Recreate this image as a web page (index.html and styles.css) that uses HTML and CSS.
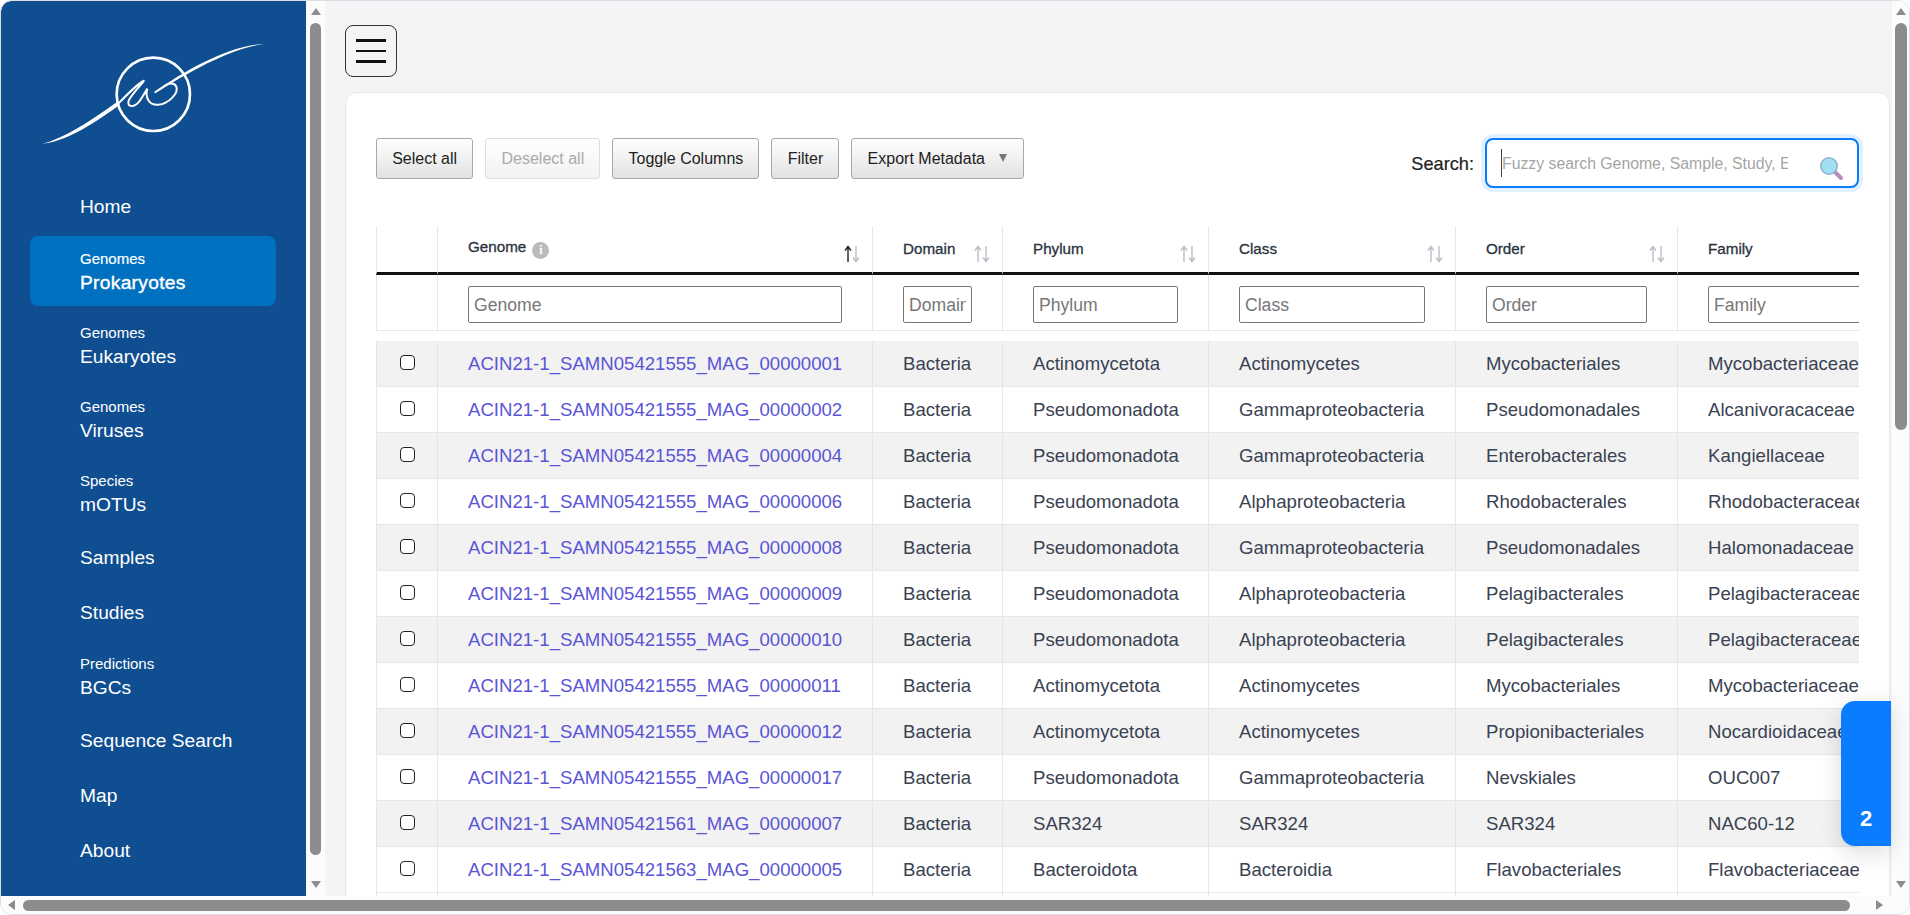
FILE: index.html
```html
<!DOCTYPE html>
<html lang="en">
<head>
    <meta charset="UTF-8">
    <meta name="viewport" content="width=device-width, initial-scale=1.0">
    <title>Genomes - Prokaryotes</title>
    <link rel="stylesheet" href="styles.css">
</head>
<body>
    <div class="window">
        <div class="window-body">
            <aside class="sidebar">
                <div class="logo">
                    <svg width="250" height="130" viewBox="0 0 750 390" fill="none">
                        <circle cx="370" cy="193" r="110" stroke="#fff" stroke-width="8"/>
                        <path d="M36 342C100 325 170 282 260 217L267 226C175 294 100 335 36 342Z" fill="#fff"/>
                        <path d="M262 224C290 195 318 165 340 153C350 148 305 190 296 212C290 232 312 234 328 214C340 198 346 185 352 176C345 200 355 226 385 224C415 222 447 190 439 170C434 158 418 158 402 168" stroke="#fff" stroke-width="6"/>
                        <path d="M372 186C470 120 590 50 702 41C620 56 530 92 376 190Z" fill="#fff"/>
                    </svg>
                </div>
                <nav class="nav">
                    <a class="nav-item nav-first" href="#">Home</a>
                    <a class="nav-item nav-double active" href="#"><small>Genomes</small>Prokaryotes</a>
                    <a class="nav-item nav-double" href="#"><small>Genomes</small>Eukaryotes</a>
                    <a class="nav-item nav-double" href="#"><small>Genomes</small>Viruses</a>
                    <a class="nav-item nav-double" href="#"><small>Species</small>mOTUs</a>
                    <a class="nav-item" href="#">Samples</a>
                    <a class="nav-item" href="#">Studies</a>
                    <a class="nav-item nav-double" href="#"><small>Predictions</small>BGCs</a>
                    <a class="nav-item" href="#">Sequence Search</a>
                    <a class="nav-item" href="#">Map</a>
                    <a class="nav-item" href="#">About</a>
                </nav>
            </aside>
            <div class="vbar vbar-side">
                <span class="arrow-up"></span>
                <span class="thumb thumb-side"></span>
                <span class="arrow-down"></span>
            </div>

            <main class="main">
                <button class="toggler" aria-label="Menu"><span></span><span></span><span></span></button>

                <section class="card">
                    <div class="toolbar">
                        <div class="buttons">
                            <button class="btn">Select all</button>
                            <button class="btn btn-disabled">Deselect all</button>
                            <button class="btn">Toggle Columns</button>
                            <button class="btn">Filter</button>
                            <button class="btn btn-export">Export Metadata <i class="caret-down"></i></button>
                        </div>
                        <label class="search">
                            <span class="search-label">Search:</span>
                            <span class="search-box">
                                <input type="text" placeholder="Fuzzy search Genome, Sample, Study, Experiment">
                                <i class="text-cursor"></i>
                                <svg class="search-icon" width="24" height="24" viewBox="0 0 24 24">
                                    <path d="M15 15L22 22" stroke="#b48dbb" stroke-width="4" stroke-linecap="round"/>
                                    <circle cx="10" cy="10" r="8.2" fill="#a0e0f0" stroke="#8fb3cf" stroke-width="1.6"/>
                                </svg>
                            </span>
                        </label>
                    </div>

                    <div class="table-scroll">
                        <table class="grid grid-head">
                            <colgroup>
                                <col class="c-check"><col class="c-genome"><col class="c-domain"><col class="c-phylum"><col class="c-class"><col class="c-order"><col class="c-family">
                            </colgroup>
                            <thead>
                                <tr class="title-row">
                                    <th></th>
                                    <th>Genome <i class="info">i</i><svg class="sort" width="16" height="18" viewBox="0 0 16 18"><path d="M4 17V2M1 5.5L4 1.5L7 5.5" stroke="#222" stroke-width="1.4" fill="none"/><path d="M12 1V16M9 12.5L12 16.5L15 12.5" stroke="#b9bfc7" stroke-width="1.4" fill="none"/></svg></th>
                                    <th>Domain<svg class="sort" width="16" height="18" viewBox="0 0 16 18"><path d="M4 17V2M1 5.5L4 1.5L7 5.5M12 1V16M9 12.5L12 16.5L15 12.5" stroke="#b9bfc7" stroke-width="1.4" fill="none"/></svg></th>
                                    <th>Phylum<svg class="sort" width="16" height="18" viewBox="0 0 16 18"><path d="M4 17V2M1 5.5L4 1.5L7 5.5M12 1V16M9 12.5L12 16.5L15 12.5" stroke="#b9bfc7" stroke-width="1.4" fill="none"/></svg></th>
                                    <th>Class<svg class="sort" width="16" height="18" viewBox="0 0 16 18"><path d="M4 17V2M1 5.5L4 1.5L7 5.5M12 1V16M9 12.5L12 16.5L15 12.5" stroke="#b9bfc7" stroke-width="1.4" fill="none"/></svg></th>
                                    <th>Order<svg class="sort" width="16" height="18" viewBox="0 0 16 18"><path d="M4 17V2M1 5.5L4 1.5L7 5.5M12 1V16M9 12.5L12 16.5L15 12.5" stroke="#b9bfc7" stroke-width="1.4" fill="none"/></svg></th>
                                    <th>Family</th>
                                </tr>
                                <tr class="filter-row">
                                    <td></td>
                                    <td><input type="text" placeholder="Genome"></td>
                                    <td><input type="text" placeholder="Domain"></td>
                                    <td><input type="text" placeholder="Phylum"></td>
                                    <td><input type="text" placeholder="Class"></td>
                                    <td><input type="text" placeholder="Order"></td>
                                    <td><input type="text" placeholder="Family"></td>
                                </tr>
                            </thead>
                        </table>
                        <table class="grid grid-body">
                            <colgroup>
                                <col class="c-check"><col class="c-genome"><col class="c-domain"><col class="c-phylum"><col class="c-class"><col class="c-order"><col class="c-family">
                            </colgroup>
                            <tbody>
                                <tr><td class="cell-check"><input type="checkbox"></td><td><a href="#">ACIN21-1_SAMN05421555_MAG_00000001</a></td><td>Bacteria</td><td>Actinomycetota</td><td>Actinomycetes</td><td>Mycobacteriales</td><td>Mycobacteriaceae</td></tr>
                                <tr><td class="cell-check"><input type="checkbox"></td><td><a href="#">ACIN21-1_SAMN05421555_MAG_00000002</a></td><td>Bacteria</td><td>Pseudomonadota</td><td>Gammaproteobacteria</td><td>Pseudomonadales</td><td>Alcanivoracaceae</td></tr>
                                <tr><td class="cell-check"><input type="checkbox"></td><td><a href="#">ACIN21-1_SAMN05421555_MAG_00000004</a></td><td>Bacteria</td><td>Pseudomonadota</td><td>Gammaproteobacteria</td><td>Enterobacterales</td><td>Kangiellaceae</td></tr>
                                <tr><td class="cell-check"><input type="checkbox"></td><td><a href="#">ACIN21-1_SAMN05421555_MAG_00000006</a></td><td>Bacteria</td><td>Pseudomonadota</td><td>Alphaproteobacteria</td><td>Rhodobacterales</td><td>Rhodobacteraceae</td></tr>
                                <tr><td class="cell-check"><input type="checkbox"></td><td><a href="#">ACIN21-1_SAMN05421555_MAG_00000008</a></td><td>Bacteria</td><td>Pseudomonadota</td><td>Gammaproteobacteria</td><td>Pseudomonadales</td><td>Halomonadaceae</td></tr>
                                <tr><td class="cell-check"><input type="checkbox"></td><td><a href="#">ACIN21-1_SAMN05421555_MAG_00000009</a></td><td>Bacteria</td><td>Pseudomonadota</td><td>Alphaproteobacteria</td><td>Pelagibacterales</td><td>Pelagibacteraceae</td></tr>
                                <tr><td class="cell-check"><input type="checkbox"></td><td><a href="#">ACIN21-1_SAMN05421555_MAG_00000010</a></td><td>Bacteria</td><td>Pseudomonadota</td><td>Alphaproteobacteria</td><td>Pelagibacterales</td><td>Pelagibacteraceae</td></tr>
                                <tr><td class="cell-check"><input type="checkbox"></td><td><a href="#">ACIN21-1_SAMN05421555_MAG_00000011</a></td><td>Bacteria</td><td>Actinomycetota</td><td>Actinomycetes</td><td>Mycobacteriales</td><td>Mycobacteriaceae</td></tr>
                                <tr><td class="cell-check"><input type="checkbox"></td><td><a href="#">ACIN21-1_SAMN05421555_MAG_00000012</a></td><td>Bacteria</td><td>Actinomycetota</td><td>Actinomycetes</td><td>Propionibacteriales</td><td>Nocardioidaceae</td></tr>
                                <tr><td class="cell-check"><input type="checkbox"></td><td><a href="#">ACIN21-1_SAMN05421555_MAG_00000017</a></td><td>Bacteria</td><td>Pseudomonadota</td><td>Gammaproteobacteria</td><td>Nevskiales</td><td>OUC007</td></tr>
                                <tr><td class="cell-check"><input type="checkbox"></td><td><a href="#">ACIN21-1_SAMN05421561_MAG_00000007</a></td><td>Bacteria</td><td>SAR324</td><td>SAR324</td><td>SAR324</td><td>NAC60-12</td></tr>
                                <tr><td class="cell-check"><input type="checkbox"></td><td><a href="#">ACIN21-1_SAMN05421563_MAG_00000005</a></td><td>Bacteria</td><td>Bacteroidota</td><td>Bacteroidia</td><td>Flavobacteriales</td><td>Flavobacteriaceae</td></tr>
                                <tr><td></td><td></td><td></td><td></td><td></td><td></td><td></td></tr>
                            </tbody>
                        </table>
                    </div>
                </section>
            </main>

            <div class="vbar vbar-page">
                <span class="arrow-up"></span>
                <span class="thumb thumb-page"></span>
                <span class="arrow-down"></span>
            </div>
        </div>

        <div class="hbar">
            <span class="arrow-left"></span>
            <span class="thumb thumb-h"></span>
            <span class="arrow-right"></span>
        </div>

        <div class="side-tab">2</div>
    </div>
</body>
</html>
```

FILE: styles.css
```css
:root {
    --sidebar-bg: #0f4e91;
    --active-bg: #0070c0;
    --accent: #0a7cff;
    --text-color: #3a4252;
    --head-color: #2b3340;
    --line-color: #e6e6e6;
    --scroll-color: #8c8c8c;
}

* {
    box-sizing: border-box;
    margin: 0;
    padding: 0;
}

html, body {
    height: 100%;
    overflow: hidden;
}

body {
    font-family: "Liberation Sans", "Noto Sans CJK SC", sans-serif;
    color: var(--text-color);
    background: #fff;
}

.window {
    position: relative;
    height: 915px;
    display: flex;
    flex-direction: column;
    overflow: hidden;
    border: 1px solid #dcdee2;
    border-radius: 12px;
    background: #fff;
}

.window-body {
    display: flex;
    height: 895px;
}

/* sidebar */
.sidebar {
    width: 305px;
    flex: none;
    background: var(--sidebar-bg);
    border-top-left-radius: 10px;
}

.logo {
    height: 181px;
    padding: 29px 0 0 29px;
}

.logo svg {
    display: block;
}

.nav {
    display: flex;
    flex-direction: column;
    gap: 4px;
    padding: 0 30px 0 29px;
}

.nav-item {
    display: flex;
    flex-direction: column;
    justify-content: center;
    height: 50.6px;
    padding: 2px 0 0 50px;
    color: #fff;
    font-size: 19.2px;
    text-decoration: none;
    border-radius: 8px;
}

.nav-first {
    height: 50px;
    padding-top: 0;
}

.nav-double {
    height: 70px;
    padding-top: 0;
    line-height: 25px;
}

.nav-double small {
    font-size: 15px;
    line-height: 22px;
}

.nav-item.active {
    background: var(--active-bg);
    -webkit-text-stroke: 0.4px #fff;
    letter-spacing: 0.3px;
}

.nav-item.active small {
    letter-spacing: 0;
    -webkit-text-stroke: 0.2px #fff;
}

/* fake scrollbars */
.vbar {
    flex: none;
    display: flex;
    flex-direction: column;
    align-items: center;
    background: #fcfcfc;
}

.vbar-side {
    width: 19px;
}

.vbar-page {
    width: 17px;
}

.thumb {
    display: block;
    background: var(--scroll-color);
    border-radius: 6px;
}

.thumb-side {
    width: 11px;
    height: 832px;
}

.thumb-page {
    width: 12px;
    height: 407px;
}

.thumb-h {
    width: 1827px;
    height: 11px;
}

.arrow-up,
.arrow-down,
.arrow-left,
.arrow-right {
    display: block;
    width: 0;
    height: 0;
    flex: none;
    border-style: solid;
    border-color: transparent;
}

.arrow-up {
    margin: 7px 0 8px;
    border-width: 0 5px 7px;
    border-bottom-color: var(--scroll-color);
}

.arrow-down {
    margin-top: auto;
    margin-bottom: 8px;
    border-width: 7px 5px 0;
    border-top-color: var(--scroll-color);
}

.hbar {
    display: flex;
    align-items: center;
    height: 18px;
    background: #fcfcfc;
}

.arrow-left {
    margin: 0 8px 0 7px;
    border-width: 5px 7px 5px 0;
    border-right-color: var(--scroll-color);
}

.arrow-right {
    margin-left: 26px;
    border-width: 5px 0 5px 7px;
    border-left-color: var(--scroll-color);
}

/* main area */
.main {
    flex: 1;
    min-width: 0;
    overflow: hidden;
    padding: 24px 2px 0 20px;
    background: #f3f4f6;
}

.toggler {
    display: flex;
    flex-direction: column;
    justify-content: center;
    gap: 8px;
    width: 52px;
    height: 52px;
    padding: 0 10px;
    background: transparent;
    border: 1px solid #333;
    border-radius: 8px;
}

.toggler span {
    display: block;
    height: 2.5px;
    background: #111;
}

.card {
    margin-top: 15px;
    height: 900px;
    padding: 45px 30px 0;
    background: #fff;
    border: 1px solid #e5e7eb;
    border-radius: 12px;
}

.toolbar {
    display: flex;
    justify-content: space-between;
    align-items: flex-start;
    margin-bottom: 38px;
}

.buttons {
    display: flex;
    gap: 12px;
}

.btn {
    height: 41px;
    padding: 0 15.2px;
    font: 16px "Liberation Sans", "Noto Sans CJK SC", sans-serif;
    color: #222;
    background: linear-gradient(to bottom, #fff 0%, #e2e2e2 100%);
    border: 1px solid #a8a8a8;
    border-radius: 3px;
}

.btn-disabled {
    color: #aaa;
    background: linear-gradient(to bottom, #fff 0%, #f2f2f2 100%);
    border-color: #dedede;
}

.caret-down {
    display: inline-block;
    margin: 0 0 3px 10px;
    border-style: solid;
    border-width: 8px 4px 0;
    border-color: #777 transparent transparent;
    vertical-align: middle;
}

.search {
    display: flex;
    align-items: center;
    gap: 11px;
}

.search-label {
    padding-top: 2px;
    font-size: 18.2px;
    color: #222;
    -webkit-text-stroke: 0.2px #222;
}

.search-box {
    position: relative;
    display: block;
    width: 374px;
    height: 50px;
}

.search-box input {
    width: 100%;
    height: 100%;
    padding: 2px 69px 0 15px;
    font: 15.8px "Liberation Sans", "Noto Sans CJK SC", sans-serif;
    background: #fff;
    border: 2px solid var(--accent);
    border-radius: 8px;
    outline: none;
    box-shadow: 0 0 0 4px #e3f0ff;
}

.search-box input::placeholder {
    color: #a5a5a5;
}

.text-cursor {
    position: absolute;
    left: 16px;
    top: 11px;
    width: 1px;
    height: 28px;
    background: #444;
}

.search-icon {
    position: absolute;
    right: 16px;
    top: 18px;
}

/* table */
.table-scroll {
    width: 100%;
    overflow: hidden;
}

.grid {
    width: 1545px;
    table-layout: fixed;
    border-collapse: separate;
    border-spacing: 0;
}

.c-check { width: 61px; }
.c-genome { width: 435px; }
.c-domain { width: 130px; }
.c-phylum { width: 206px; }
.c-class { width: 247px; }
.c-order { width: 222px; }
.c-family { width: 244px; }

.grid th,
.grid td {
    border-left: 1px solid var(--line-color);
    padding: 0 30px;
    text-align: left;
    white-space: nowrap;
    overflow: hidden;
}

.title-row th {
    position: relative;
    height: 49px;
    font-size: 15.2px;
    font-weight: normal;
    color: var(--head-color);
    -webkit-text-stroke: 0.3px var(--head-color);
    border-bottom: 3px solid #111;
    padding-bottom: 1px;
}

.info {
    display: inline-block;
    width: 17px;
    height: 17px;
    margin-left: 2px;
    border-radius: 50%;
    background: #bbb;
    color: #fff;
    font: bold 12px/17px "Liberation Serif", serif;
    text-align: center;
    vertical-align: -2px;
    -webkit-text-stroke: 0;
}

.sort {
    position: absolute;
    right: 12px;
    top: 19px;
}

.filter-row td {
    height: 56px;
    padding-top: 3px;
    border-bottom: 1px solid var(--line-color);
}

.filter-row input {
    display: block;
    width: 100%;
    height: 37px;
    padding: 2px 5px 0;
    font: 17.6px "Liberation Sans", "Noto Sans CJK SC", sans-serif;
    border: 1px solid #767676;
    border-radius: 2px;
}

.filter-row input::placeholder {
    color: #777;
}

.grid-body {
    margin-top: 10px;
}

.grid-body td {
    height: 46px;
    font-size: 18.6px;
    border-bottom: 1px solid var(--line-color);
}

.grid-body tr:nth-child(odd) td {
    background: #f2f2f2;
}

.grid-body tr:last-child td {
    background: #fff;
}

.grid-body a {
    color: #5a55d6;
    text-decoration: none;
}

.cell-check {
    text-align: center !important;
    padding: 0 !important;
}

.cell-check input {
    appearance: none;
    display: block;
    width: 15px;
    height: 15px;
    margin: 0 auto 3px;
    background: #fff;
    border: 1.5px solid #222;
    border-radius: 4px;
}

/* floating tab on the right edge */
.side-tab {
    position: absolute;
    left: 1840px;
    top: 700px;
    width: 50px;
    height: 145px;
    padding: 0 0 14px;
    display: flex;
    align-items: flex-end;
    justify-content: center;
    font-size: 22px;
    font-weight: bold;
    color: #fff;
    background: var(--accent);
    border-radius: 14px 0 0 14px;
    box-shadow: 0 6px 24px rgba(0,0,0,0.15);
}
```
